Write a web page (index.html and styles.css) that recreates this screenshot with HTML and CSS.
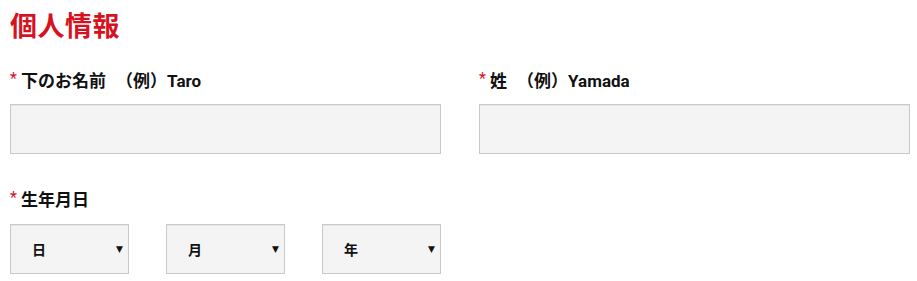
FILE: index.html
```html
<!DOCTYPE html>
<html lang="ja">
<head>
<meta charset="utf-8">
<title>個人情報</title>
<link rel="stylesheet" href="styles.css">
</head>
<body>
<section class="form">
  <h2 class="title">個人情報</h2>
  <div class="row">
    <div class="field">
      <label class="label"><span class="req">*</span>下のお名前 （例）Taro</label>
      <input class="input" type="text">
    </div>
    <div class="field">
      <label class="label"><span class="req">*</span>姓 （例）Yamada</label>
      <input class="input" type="text">
    </div>
  </div>
  <div class="row">
    <div class="field">
      <label class="label label-dob"><span class="req">*</span>生年月日</label>
      <div class="selects">
        <div class="select"><span>日</span><span class="arrow">▼</span></div>
        <div class="select"><span>月</span><span class="arrow">▼</span></div>
        <div class="select"><span>年</span><span class="arrow">▼</span></div>
      </div>
    </div>
    <div class="field"></div>
  </div>
</section>
</body>
</html>
```

FILE: styles.css
```css
* { box-sizing: border-box; }
html, body { margin: 0; padding: 0; background: #fff; }
body {
  font-family: "Roboto", "Noto Sans CJK JP", sans-serif;
  color: #111;
}
.form {
  width: 900px;
  margin-left: 10px;
  padding-top: 6px;
}
.title {
  margin: 0;
  font-family: "Noto Sans CJK JP", sans-serif;
  font-size: 27px;
  line-height: 38px;
  font-weight: 700;
  color: #d7121f;
  letter-spacing: 0.5px;
}
.row {
  display: grid;
  grid-template-columns: 431px 431px;
  column-gap: 38px;
}
.field {
  display: flex;
  flex-direction: column;
}
.label {
  display: flex;
  align-items: center;
  height: 24px;
  margin-top: 23px;
  font-size: 17px;
  font-weight: 700;
  color: #111;
  white-space: pre;
  word-spacing: 6px;
}
.label-dob { margin-top: 32px; }
.req {
  color: #d7121f;
  font-size: 16px;
  font-weight: 400;
  margin-right: 4px;
  position: relative;
  top: -1px;
  word-spacing: 0;
}
.input {
  display: block;
  width: 100%;
  height: 50px;
  margin-top: 13px;
  border: 1px solid #c9c9c9;
  background: #f4f4f4;
  box-shadow: inset 0 1px 1px rgba(0,0,0,0.06);
  padding: 0 10px;
  font-size: 16px;
}
.selects {
  display: grid;
  grid-template-columns: repeat(3, 119px);
  column-gap: 37px;
  margin-top: 14px;
}
.select {
  display: flex;
  align-items: center;
  justify-content: space-between;
  height: 50px;
  border: 1px solid #c9c9c9;
  background: #f4f4f4;
  box-shadow: inset 0 1px 1px rgba(0,0,0,0.06);
  padding: 0 5px 0 21px;
  font-family: "Noto Sans CJK JP", sans-serif;
  font-size: 14px;
  font-weight: 700;
  color: #111;
}
.arrow {
  font-size: 9px;
  font-family: "DejaVu Sans", sans-serif;
  color: #111;
}
```
